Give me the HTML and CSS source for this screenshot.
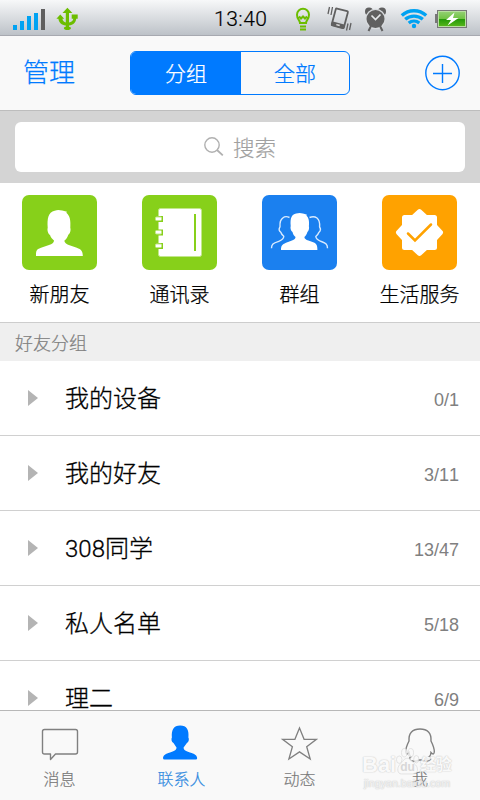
FILE: index.html
```html
<!DOCTYPE html>
<html lang="zh-CN">
<head>
<meta charset="utf-8">
<title>联系人</title>
<link rel="stylesheet" href="styles.css">
</head>
<body>
<div class="app">
  <div class="status">
    <div class="status-left">
      <svg width="34" height="24" viewBox="12 6 34 24"><g fill="#00a2f2"><path d="M13 24h4v5h-4zM20 20h4v9h-4zM27 15h4v14h-4zM34 12h4v17h-4z"/></g><path fill="#5f5f5f" d="M41 8h4v21h-4z"/></svg>
      <svg width="24" height="24" viewBox="56 6 24 24"><path fill="#6cbd00" d="M67.400 6.700l5 5.300h-3.400v9.500c2.400-.6 4-1.600 4.300-3.800h-1.600v-4.200h6v4.200h-1.500c-.5 4.200-3 6-7.200 6.800v1.200c1.500.2 1.900.8 1.900 1.500 0 1.200-1.500 1.800-3.500 1.800s-3.500-.6-3.500-1.800c0-.7.500-1.300 1.900-1.500v-1.200c-4.300-.7-6.800-2.800-7.400-6.800h-2l3.900-4.300 3.900 4.300h-1.800c.4 2.200 1.500 3.300 3.400 3.800V12h-3.300z"/></svg>
    </div>
    <div class="clock">13:40</div>
    <svg class="status-right" width="172" height="28" viewBox="296 4 172 28">
      <g fill="none" stroke="#6cbd00" stroke-width="2"><path d="M300 22c0-3-3-3.500-3-8.300a6 6 0 0 1 12 0c0 4.800-3 5.300-3 8.300zM299 15.500l2 2 2-2 2 2 2-2"/><path d="M300 25.500h6M300 28.500h6"/></g>
      <g transform="rotate(15 339.500 17.500)"><rect x="333.500" y="8.500" width="12.500" height="17.500" rx="1" fill="none" stroke="#606060" stroke-width="1.800"/><path fill="#606060" d="M333 22h13.500v4.500h-13.500z"/><path fill="#ddd" d="M338 23.500h3.500v1.500h-3.500z"/></g>
      <path fill="none" stroke="#606060" stroke-width="1.300" d="M332.500 6l-1.500 8M329.500 6l-1.500 7M348 22.500l-1.500 7M351 22l-1.500 7"/>
      <g fill="#606060"><circle cx="369" cy="10.500" r="4"/><circle cx="382" cy="10.500" r="4"/><circle cx="375.500" cy="18" r="10.300" fill="#d8dbde"/><circle cx="375.500" cy="18" r="9"/></g>
      <path stroke="#606060" stroke-width="2" d="M371 25l-2.500 5M380 25l2.500 5"/><path fill="none" stroke="#e5e8ea" stroke-width="1.700" d="M371.500 14.500l4 4 5-5"/>
      <g fill="none" stroke="#00a2f2" stroke-width="3.300"><path d="M401.800 14.500a18 18 0 0 1 24.400 0M405.200 18.300a13.500 13.500 0 0 1 17.600 0M408.700 22a8.500 8.500 0 0 1 10.600 0"/></g><circle cx="414" cy="25" r="2.200" fill="#00a2f2"/>
      <defs><linearGradient id="bat" x2="0" y2="1"><stop stop-color="#91cf70"/><stop offset=".48" stop-color="#70c343"/><stop offset=".52" stop-color="#249808"/><stop offset="1" stop-color="#53b51a"/></linearGradient></defs>
      <path fill="#777" d="M435 13h3v9h-3zM437 9h30v18h-30z"/><path fill="#b8dfa0" d="M438 10h28v16h-28z"/><path fill="url(#bat)" d="M439 11h26v14h-26z"/><path fill="#fff" d="M454.500 11.500l-8.500 7.500h5l-3.500 5.500 11-7.500h-5.500z"/>
    </svg>
  </div>
  <header class="header">
    <span class="manage">管理</span>
    <div class="segment"><span class="seg on">分组</span><span class="seg">全部</span></div>
    <svg class="add" width="36" height="36" viewBox="0 0 36 36" fill="none" stroke="#007aff" stroke-width="1.400"><circle cx="17.500" cy="18" r="16.700"/><path d="M8 18.500h19M17.500 9v19"/></svg>
  </header>
  <div class="search-wrap"><div class="search">
    <svg width="20" height="20" viewBox="0 0 20 20" fill="none" stroke="#b0b0b0" stroke-width="1.400"><circle cx="8" cy="8" r="7.200"/><path stroke-width="1.800" d="M13 13l5.800 5.300"/></svg>
    <span>搜索</span></div></div>
  <div class="shortcuts">
    <div class="shortcut">
      <svg class="tile" viewBox="0 0 75 75"><rect width="75" height="75" rx="7" fill="#87d01a"/><path fill="#fff" d="M14 61c0-5 0-6.500 5-8.300l8-2.700c3-1 5-2.300 5-4.500-1.800-1.500-3.500-3.500-4-5.500-2-1-3-5-2.300-7.200-.6-9 .3-15.300 7-17 3-1.400 5-.8 7.500-.2l4.800 1.200-.7 1c3.800 3 4.500 8 4 15 .8 2.500-.2 6-2 7-.5 2-2 4.500-4 6 .3 2 2 3.200 4.500 4.200l8 2.700c4.500 1.800 6 3.300 6 8.300z"/></svg>
      <span>新朋友</span></div>
    <div class="shortcut">
      <svg class="tile" viewBox="0 0 75 75"><rect width="75" height="75" rx="7" fill="#87d01a"/><rect x="16.500" y="13.500" width="43" height="48" rx="2" fill="#fff" stroke="#c3e78c"/><path stroke="#87d01a" stroke-width="2" d="M53 19v37"/><path fill="#87d01a" d="M16 21h5v6h-5zM16 34.500h5v6h-5zM16 48h5v6h-5z"/><g fill="#fff" stroke="#c3e78c" stroke-width="1"><rect x="13.500" y="22" width="6" height="3.500" rx="1"/><rect x="13.500" y="35.500" width="6" height="3.500" rx="1"/><rect x="13.500" y="49" width="6" height="3.500" rx="1"/></g></svg>
      <span>通讯录</span></div>
    <div class="shortcut">
      <svg class="tile" viewBox="0 0 75 75"><rect width="75" height="75" rx="7" fill="#1b80ef"/><path fill="#fff" d="M19 55c0-4 1-5.500 5-7.200l6-2.300c2.600-1 3.500-2 3.500-3.500-1.500-1-2.500-3-3-5-1.500-1-2.500-4-1.800-6-.6-8 .8-11.300 5.500-12.500 4-1.200 6-.3 10.800 1.200l-.6 1c2.500 2 3 6 2.500 10.500.6 2-.2 4.800-1.500 5.800-.6 2-1.500 3.800-3 5 0 1.700 1.500 2.700 4 3.600l5.500 2c3 1.400 3.500 3.400 3.500 7.400z"/><path fill="none" stroke="#d9eafe" stroke-width="1.400" stroke-linejoin="round" d="M27.500 22.500c-2-1-5-1-6.500.3-2.800 1.500-3.300 4.200-3 9-1.500 2.200-.7 4.200.8 5.500.5 1.800 1.400 2.700 3 4-.2 3-2 4-5 5-5.800 1.900-7.300 2.700-7.300 7M47.500 22.500c3-1.300 5.500-1 7.500.5 2.500 2 3 4.500 2.600 9 1.500 2.200.7 4.200-.8 5.500-.5 1.600-1.400 2.600-3 4 .2 2.500 2 3.500 5 4.800 5 2 6.700 2.500 6.700 7"/></svg>
      <span>群组</span></div>
    <div class="shortcut">
      <svg class="tile" viewBox="0 0 75 75"><rect width="75" height="75" rx="7" fill="#ffa200"/><path fill="#fff" stroke="#fff" stroke-width="5" stroke-linejoin="round" d="M37.500 16.500l6.500 6h8.500v8.500l6 6.500-6 6.500v8.500H44l-6.500 6-6.500-6h-8.500V44l-6-6.500 6-6.500v-8.500H31z"/><path fill="none" stroke="#ffa200" stroke-width="2.500" stroke-linecap="round" d="M26 38.500l7 7 16-16"/></svg>
      <span>生活服务</span></div>
  </div>
  <div class="section">好友分组</div>
  <div class="list">
    <div class="row"><i class="arrow"></i><span class="name">我的设备</span><span class="count">0/1</span></div>
    <div class="row"><i class="arrow"></i><span class="name">我的好友</span><span class="count">3/11</span></div>
    <div class="row"><i class="arrow"></i><span class="name">308同学</span><span class="count">13/47</span></div>
    <div class="row"><i class="arrow"></i><span class="name">私人名单</span><span class="count">5/18</span></div>
    <div class="row"><i class="arrow"></i><span class="name">理二</span><span class="count">6/9</span></div>
  </div>
  <nav class="tabs">
    <div class="tab"><svg width="40" height="36" viewBox="0 0 40 36"><path fill="none" stroke="#808080" stroke-width="1.400" stroke-linejoin="round" d="M4.500 5.500h31q2 0 2 2v20.500q0 2-2 2H15.500l-5 5.500v-5.500h-6q-2 0-2-2v-20.500q0-2 2-2z"/></svg><span>消息</span></div>
    <div class="tab on"><svg width="40" height="36" viewBox="0 0 40 36"><path fill="#007aff" d="M3 34c.5-3 2.500-4 7-5.500 4-1.200 6.500-2.300 6.500-5l-3-4.500c-2-1-2.500-4-1.600-5.500-.6-7.500 1.600-12 8.300-12s9 4.500 8.200 12c1 1.500.4 4.500-1.500 5.500l-3.300 4.500c0 2.700 2.400 3.800 6.400 5 4.500 1.500 6.700 2.500 7.200 5.500q0 1.500-1.500 1.500h-31.200q-1.500 0-1.500-1.500z"/></svg><span>联系人</span></div>
    <div class="tab"><svg width="40" height="36" viewBox="0 0 40 36"><path fill="none" stroke="#808080" stroke-width="1.300" d="M19.500 4l4.600 11.300h12.300l-9.700 7.500 3.500 12.200-10.700-7.100L8.900 35l3.500-12.200-9.800-7.500h12.300z"/></svg><span>动态</span></div>
    <div class="tab"><svg width="40" height="36" viewBox="0 0 40 36"><path fill="none" stroke="#808080" stroke-width="1.400" d="M9 17C8.500 9 12.500 5 20 5S31.500 9 31 17c2 4 3.500 7.500 3.300 11-.3 2.500-1.500 2.500-3.300.5 0 2-.5 3-1.800 4.200 1.800.8 2 2.600.8 3.600-3 1.300-7 1.200-8.500-.3h-3c-1.500 1.500-5.500 1.600-8 .3-1.300-1-1.200-2.800.5-3.600-1.300-1.200-1.800-2.200-2-4.200-1.700 2-3 2-3.300-.5C5.500 24.500 7 21 9 17z"/></svg><span>我</span></div>
  </nav>
  <div class="watermark">
    <div class="wm-main"><b>Bai</b><svg width="24" height="31" viewBox="0 0 26 31"><g fill="#fafafa" stroke="#d4d4d4" stroke-width=".8"><ellipse cx="3.500" cy="13.500" rx="3" ry="4"/><ellipse cx="9" cy="6" rx="3" ry="4.500"/><ellipse cx="16" cy="6" rx="3" ry="4.500"/><ellipse cx="22" cy="13" rx="2.800" ry="4"/><path d="M12.500 12c4 0 5 4 8.500 7s3 10-2 10H6c-5 0-5-7-2-10s4.500-7 8.500-7z"/></g><text x="12.500" y="26" text-anchor="middle">du</text></svg><b class="cn">经验</b></div>
    <div class="wm-url">jingyan.baidu.com</div>
  </div>
</div>
</body>
</html>
```
FILE: styles.css
```css
* { box-sizing: border-box; }
body {
  margin: 0;
  font-family: "Liberation Sans", "Noto Sans CJK SC", sans-serif;
  font-weight: 300;
  font-kerning: none;
  background: #fff;
}
.app {
  position: relative;
  width: 480px;
  height: 800px;
  display: flex;
  flex-direction: column;
  overflow: hidden;
}
.app > * { flex: none; }
.status {
  height: 36px;
  display: grid;
  grid-template-columns: 214px 1fr 184px;
  align-items: center;
  background: linear-gradient(#f7f8f9, #bdc2c8);
  border-bottom: 1px solid #a7a9b0;
}
.status-left { display: flex; gap: 10px; padding-left: 12px; }
.clock { font: 300 21px/36px Roboto, sans-serif; letter-spacing: .5px; color: #000; -webkit-text-stroke: .2px; padding-top: 1px; }
.status svg { display: block; }
.status-right { margin-top: 1px; }
.header {
  height: 75px;
  display: flex;
  align-items: center;
  padding: 0 19px 0 23px;
  background: #f9f9f9;
  border-bottom: 1px solid #bdbdbd;
  color: #007aff;
  -webkit-text-stroke: .25px;
}
.manage { width: 107px; font-size: 26px; line-height: 36px; }
.segment {
  display: flex;
  width: 220px;
  height: 44px;
  border: 1.5px solid #007aff;
  border-radius: 6px;
  overflow: hidden;
}
.seg { flex: 1; font-size: 21px; line-height: 44px; text-align: center; }
.seg.on { flex: 0 0 110px; background: #007aff; color: #fff; }
.add { margin-left: auto; }
.search-wrap { height: 72px; padding: 11px 15px; background: #d4d4d4; }
.search {
  height: 50px;
  display: flex;
  align-items: center;
  justify-content: center;
  gap: 9px;
  background: #fff;
  border-radius: 6px;
  color: #a0a0a0;
  font-size: 21.5px;
  line-height: 30px;
  -webkit-text-stroke: .2px;
}
.search svg { margin-bottom: 1px; }
.search span { padding-top: 3px; }
.shortcuts { height: 139px; display: grid; grid-template-columns: repeat(4, 120px); padding-top: 12px; }
.shortcut { display: flex; flex-direction: column; align-items: center; padding-right: 1px; font-size: 20px; line-height: 30px; color: #000; -webkit-text-stroke: .25px; white-space: nowrap; }
.tile { width: 75px; height: 75px; margin-bottom: 10px; }
.section {
  height: 39px;
  padding-left: 15px;
  background: #efefef;
  border-top: 1px solid #cdcdcd;
  color: #808080;
  font-size: 18px;
  line-height: 42px;
  -webkit-text-stroke: .2px;
}
.app > .list { flex: 1; min-height: 0; overflow: hidden; }
.row {
  height: 75px;
  display: flex;
  align-items: center;
  padding: 0 21px 0 28px;
  border-bottom: 1px solid #d0d0d0;
}
.arrow { border-left: 10px solid #b4b4b4; border-top: 8px solid transparent; border-bottom: 8px solid transparent; }
.name { margin-left: 27px; padding-top: 1px; font-family: Roboto, "Noto Sans CJK SC", sans-serif; font-size: 24px; line-height: 36px; color: #000; -webkit-text-stroke: .3px; }
.count { margin-left: auto; font-size: 18px; color: #808080; padding-top: 4px; }
.tabs {
  height: 90px;
  display: grid;
  grid-template-columns: repeat(4, 120px);
  background: #f9f9f9;
  border-top: 1px solid #b8b8b8;
  padding-top: 13px;
}
.tab { display: flex; flex-direction: column; align-items: center; color: #777; font-size: 16px; line-height: 24px; gap: 8px; -webkit-text-stroke: .2px; }
.tab:first-child, .tab:nth-child(3) { padding-right: 1px; }
.tab svg { overflow: visible; }
.tab.on { color: #2f89df; }
.tab.on span { padding-left: 3px; }
.watermark {
  position: absolute;
  left: 362px;
  top: 746px;
  width: 96px;
  opacity: .8;
  color: #fafafa;
  text-shadow: 0 0 1px #c4c4c4, 0 0 1.5px #c4c4c4;
}
.wm-main { display: flex; align-items: flex-end; height: 31px; font-size: 22px; line-height: 25px; }
.wm-main b { font-weight: 700; }
.wm-main .cn { font-size: 16px; letter-spacing: -.5px; }
.wm-main text { font: 700 13px "Liberation Sans", sans-serif; fill: #d0d0d0; text-shadow: none; }
.wm-url { padding-left: 2px; font-size: 10.7px; line-height: 12px; color: #f2f2f2; }
```
